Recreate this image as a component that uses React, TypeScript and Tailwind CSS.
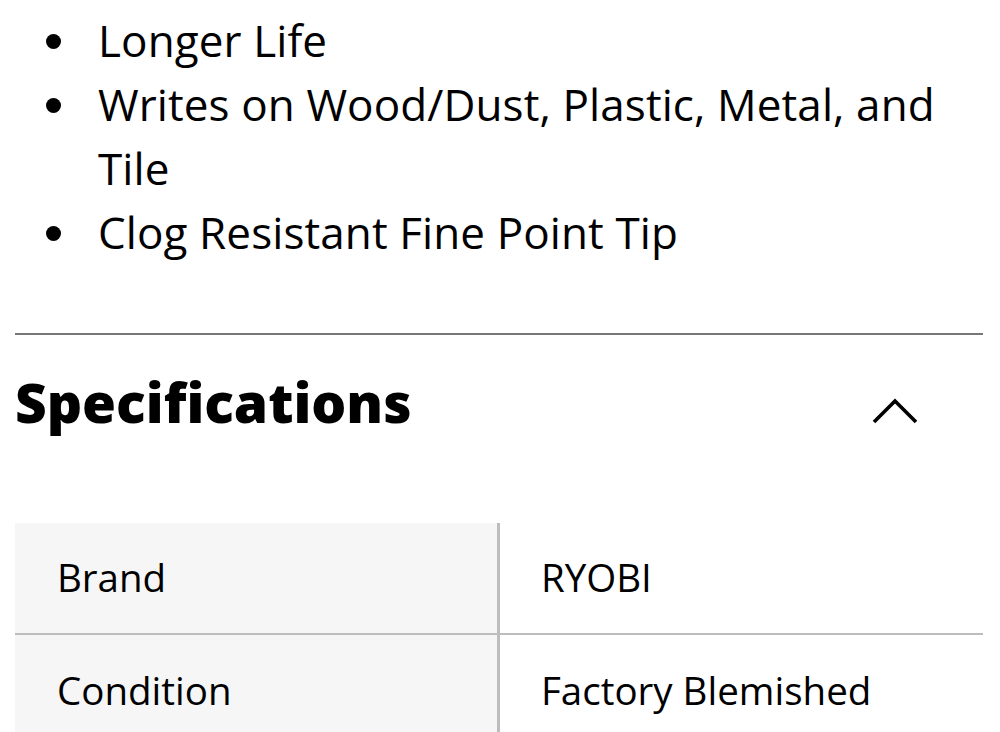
import React from "react";

const font = { fontFamily: '"Open Sans", "Liberation Sans", sans-serif' };

const bullets = [
  "Longer Life",
  "Writes on Wood/Dust, Plastic, Metal, and Tile",
  "Clog Resistant Fine Point Tip",
];

const specs = [
  ["Brand", "RYOBI"],
  ["Condition", "Factory Blemished"],
];

export default function App() {
  return (
    <div
      className="w-[1000px] h-[732px] overflow-hidden bg-white text-black pl-[15px] pr-[17px]"
      style={font}
    >
      <ul className="pt-[8px] pb-[69px] border-b-[2px] border-[#777777]">
        {bullets.map((b) => (
          <li key={b} className="flex items-start">
            <span className="mt-[26px] ml-[31px] w-[15px] h-[15px] rounded-full bg-black shrink-0" />
            <span className="ml-[37px] text-[44px] leading-[64px] tracking-[0.1px]">{b}</span>
          </li>
        ))}
      </ul>
      <div className="flex items-start justify-between pt-[29px] pb-[83px]">
        <h2 className="text-[55px] font-extrabold leading-[76px]">Specifications</h2>
        <svg
          width="46"
          height="26"
          viewBox="0 0 46 26"
          className="mt-[34px] mr-[65px]"
          fill="none"
          stroke="black"
          strokeWidth="3.6"
        >
          <polyline points="2,24 23,3 44,24" />
        </svg>
      </div>
      <div>
        {specs.map(([k, v], i) => (
          <div
            key={k}
            className={`flex h-[112px] ${i === 0 ? "border-b-[2px] border-[#bdbdbd]" : ""}`}
          >
            <div className="w-[485px] bg-[#f6f6f6] flex items-center pl-[42px] text-[38.5px] border-r-[3px] border-[#bdbdbd]">
              {k}
            </div>
            <div className="flex-1 flex items-center pl-[41px] text-[38.5px]">{v}</div>
          </div>
        ))}
      </div>
    </div>
  );
}
